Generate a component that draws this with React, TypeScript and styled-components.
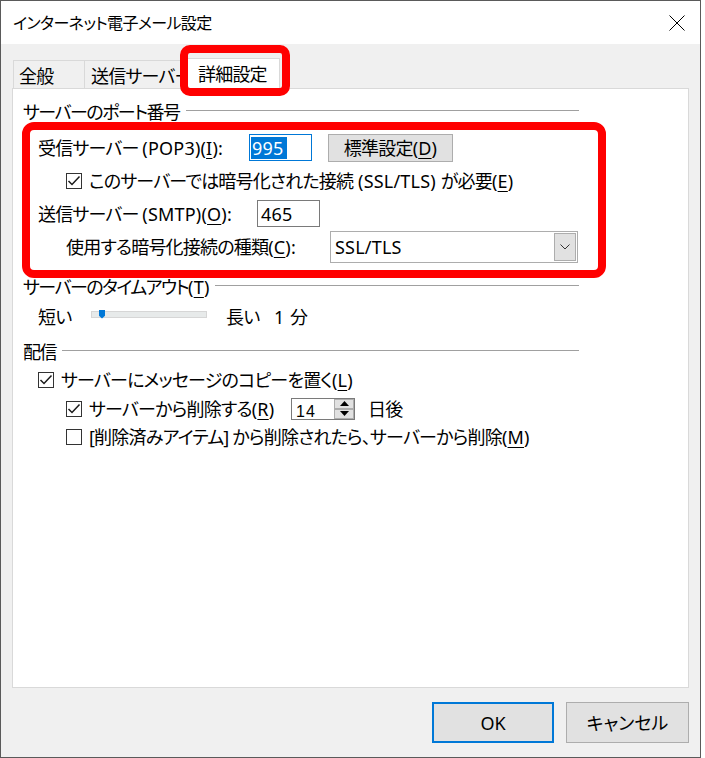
import styled, { createGlobalStyle } from "styled-components";

const GlobalStyle = createGlobalStyle`
  * {
    box-sizing: border-box;
  }
  html,
  body {
    margin: 0;
    padding: 0;
    background: #ffffff;
  }
`;

const UI_FONT = `"Noto Sans", "Noto Sans CJK JP", sans-serif`;

const Window = styled.div`
  width: 701px;
  height: 758px;
  display: flex;
  flex-direction: column;
  border: 1px solid #5a5a5a;
  background: #f0f0f0;
  font-family: ${UI_FONT};
  font-size: 18px;
  font-feature-settings: "palt";
  letter-spacing: -0.8px;
  line-height: 1;
  color: #000000;
`;

const TitleBar = styled.div`
  flex: none;
  height: 43px;
  display: flex;
  align-items: center;
  justify-content: space-between;
  padding: 0 15px 0 12px;
  background: #ffffff;
`;

const Title = styled.span`
  font-size: 16px;
  letter-spacing: -0.6px;
`;

const CloseButton = styled.span`
  display: flex;
  width: 16px;
  height: 16px;
`;

const Body = styled.div`
  flex: 1;
  display: flex;
  flex-direction: column;
  padding: 14px 11px 14px 11px;
`;

const TabStrip = styled.div`
  display: flex;
  align-items: flex-end;
  height: 30px;
  padding-left: 1px;
`;

const Tab = styled.div<{ $active?: boolean; $w: number; $pl: number; $noSides?: boolean }>`
  position: relative;
  z-index: ${(p) => (p.$active ? 2 : 0)};
  display: flex;
  align-items: center;
  width: ${(p) => p.$w}px;
  height: ${(p) => (p.$active ? 31 : 28)}px;
  margin-bottom: ${(p) => (p.$active ? -1 : 0)}px;
  padding-left: ${(p) => p.$pl}px;
  padding-top: ${(p) => (p.$active ? 0 : 2)}px;
  border: 1px solid #d9d9d9;
  border-bottom: none;
  border-left-width: ${(p) => (p.$noSides ? 0 : 1)}px;
  border-right-width: ${(p) => (p.$noSides ? 0 : 1)}px;
  background: ${(p) => (p.$active ? "#ffffff" : "#f0f0f0")};
  white-space: nowrap;
`;

const TabMark = styled.span`
  position: absolute;
  top: -14px;
  left: -7px;
  right: -11px;
  bottom: -7px;
  border: 8px solid #ff0000;
  border-radius: 10px;
  pointer-events: none;
`;

const Panel = styled.div`
  position: relative;
  z-index: 1;
  flex: 1;
  display: flex;
  flex-direction: column;
  padding: 13px 0 0 10px;
  border: 1px solid #d9d9d9;
  background: #ffffff;
`;

const GroupHeader = styled.div<{ $mt?: number }>`
  display: flex;
  align-items: center;
  width: 556px;
  height: 20px;
  margin-top: ${(p) => p.$mt ?? 0}px;
  letter-spacing: -1.5px;
  white-space: nowrap;

  &::after {
    content: "";
    flex: 1;
    height: 1px;
    margin: -3px 0 0 6px;
    background: #a0a0a0;
  }
`;

const Highlight = styled.div`
  width: 584px;
  margin-left: -1px;
  padding: 1px 0 6px 8px;
  border: 8px solid #ff0000;
  border-radius: 12px;
`;

const FieldRow = styled.div<{ $h: number; $indent?: number }>`
  display: flex;
  align-items: center;
  height: ${(p) => p.$h}px;
  padding-left: ${(p) => p.$indent ?? 0}px;
  white-space: nowrap;
`;

const FieldLabel = styled.span<{ $w: number }>`
  flex: none;
  width: ${(p) => p.$w}px;
`;

const Latin = styled.span`
  letter-spacing: 0.2px;
`;

const Key = styled.span`
  text-decoration: underline;
  text-underline-offset: 3px;
  text-decoration-thickness: 1px;
`;

const TextBox = styled.div<{ $focused?: boolean }>`
  flex: none;
  display: flex;
  align-items: center;
  width: 63px;
  height: 27px;
  padding-left: ${(p) => (p.$focused ? 1 : 3)}px;
  border: 1px solid ${(p) => (p.$focused ? "#0078d7" : "#7a7a7a")};
  background: #ffffff;
  letter-spacing: 0.2px;
`;

const Selected = styled.span`
  display: flex;
  align-items: center;
  height: 22px;
  padding: 0 3px 0 1px;
  background: #0078d7;
  color: #ffffff;
`;

const PushButton = styled.div<{ $w: number; $h: number; $default?: boolean; $ml?: number }>`
  flex: none;
  display: flex;
  align-items: center;
  justify-content: center;
  width: ${(p) => p.$w}px;
  height: ${(p) => p.$h}px;
  margin-left: ${(p) => p.$ml ?? 0}px;
  border: ${(p) => (p.$default ? "2px solid #0078d7" : "1px solid #adadad")};
  background: #e1e1e1;
`;

const CheckRow = styled.div<{ $h: number; $indent: number; $mt?: number }>`
  display: flex;
  align-items: center;
  gap: 7px;
  height: ${(p) => p.$h}px;
  margin-top: ${(p) => p.$mt ?? 0}px;
  padding-left: ${(p) => p.$indent}px;
  white-space: nowrap;
`;

const CheckText = styled.span<{ $w?: number }>`
  flex: none;
  width: ${(p) => (p.$w ? `${p.$w}px` : "auto")};
`;

const Box = styled.span`
  flex: none;
  display: flex;
  align-items: center;
  justify-content: center;
  width: 16px;
  height: 16px;
  border: 1px solid #333333;
  background: #ffffff;
`;

const Select = styled.div`
  flex: none;
  display: flex;
  align-items: center;
  justify-content: space-between;
  width: 248px;
  height: 32px;
  padding: 0 1px 0 4px;
  border: 1px solid #adadad;
  background: #ffffff;
  letter-spacing: 0.2px;
`;

const SelectArrow = styled.span`
  display: flex;
  align-items: center;
  justify-content: center;
  width: 22px;
  height: 28px;
  border: 1px solid #adadad;
  background: #e1e1e1;
`;

const SliderRow = styled.div`
  display: flex;
  align-items: center;
  height: 40px;
  padding-left: 15px;
  white-space: nowrap;
`;

const SliderText = styled.span<{ $w: number }>`
  flex: none;
  width: ${(p) => p.$w}px;
`;

const Track = styled.span`
  position: relative;
  flex: none;
  width: 116px;
  height: 7px;
  margin: -6px 19px 0 0;
  border: 1px solid #d6d6d6;
  background: #e7eaea;
`;

const Thumb = styled.span`
  position: absolute;
  left: 7px;
  top: -2px;
  width: 6px;
  height: 9px;
  background: #0078d7;
  clip-path: polygon(0 0, 100% 0, 100% 70%, 50% 100%, 0 70%);
`;

const Spinner = styled.div`
  flex: none;
  display: flex;
  width: 64px;
  height: 22px;
  margin-right: 6px;
  border: 1px solid #7a7a7a;
  background: #ffffff;
  overflow: hidden;
`;

const SpinValue = styled.span`
  flex: 1;
  padding: 5px 0 0 4px;
  font-family: "Liberation Sans", sans-serif;
  font-size: 16px;
  letter-spacing: 1px;
`;

const SpinButtons = styled.span`
  display: flex;
  flex-direction: column;
  width: 20px;
`;

const SpinButton = styled.span`
  flex: 1;
  display: flex;
  align-items: center;
  justify-content: center;
  border: 1px solid #adadad;
  background: #e1e1e1;
`;

const Footer = styled.div`
  display: flex;
  justify-content: flex-end;
  gap: 12px;
  margin-top: 14px;
  letter-spacing: 0;
`;

const Access = ({ k, colon }: { k: string; colon?: boolean }) => (
  <Latin>
    (<Key>{k}</Key>){colon ? ":" : ""}
  </Latin>
);

const Check = () => (
  <svg width="14" height="14" viewBox="0 0 14 14">
    <polyline points="1.5,7 5,10.5 12.5,2.5" fill="none" stroke="#1a1a1a" strokeWidth="1.5" />
  </svg>
);

const CheckBox = ({ checked }: { checked?: boolean }) => <Box>{checked && <Check />}</Box>;

const Triangle = ({ up }: { up?: boolean }) => (
  <svg width="9" height="5" viewBox="0 0 9 5">
    <polygon points={up ? "0,5 9,5 4.5,0" : "0,0 9,0 4.5,5"} fill="#000000" />
  </svg>
);

const App = () => (
  <>
    <GlobalStyle />
    <Window>
      <TitleBar>
        <Title>インターネット電子メール設定</Title>
        <CloseButton>
          <svg width="16" height="16" viewBox="0 0 16 16">
            <path d="M0.5 0.5 L15.5 15.5 M15.5 0.5 L0.5 15.5" stroke="#000000" strokeWidth="1" />
          </svg>
        </CloseButton>
      </TitleBar>
      <Body>
        <TabStrip>
          <Tab $w={72} $pl={5}>
            全般
          </Tab>
          <Tab $w={101} $pl={6} $noSides>
            送信サーバー
          </Tab>
          <Tab $w={94} $pl={11} $active>
            詳細設定
            <TabMark />
          </Tab>
        </TabStrip>
        <Panel>
          <GroupHeader>サーバーのポート番号</GroupHeader>
          <Highlight>
            <FieldRow $h={33}>
              <FieldLabel $w={211}>
                受信サーバー <Latin>(POP3)</Latin>
                <Access k="I" colon />
              </FieldLabel>
              <TextBox $focused>
                <Selected>995</Selected>
              </TextBox>
              <PushButton $w={125} $h={28} $ml={16}>
                標準設定
                <Access k="D" />
              </PushButton>
            </FieldRow>
            <CheckRow $h={33} $indent={28}>
              <CheckBox checked />
              <CheckText>
                このサーバーでは暗号化された接続<Latin> (SSL/TLS) </Latin>が必要
                <Access k="E" />
              </CheckText>
            </CheckRow>
            <FieldRow $h={33}>
              <FieldLabel $w={219}>
                送信サーバー <Latin>(SMTP)</Latin>
                <Access k="O" colon />
              </FieldLabel>
              <TextBox>465</TextBox>
            </FieldRow>
            <FieldRow $h={34} $indent={28}>
              <FieldLabel $w={264}>
                使用する暗号化接続の種類
                <Access k="C" colon />
              </FieldLabel>
              <Select>
                <span>SSL/TLS</span>
                <SelectArrow>
                  <svg width="10" height="6" viewBox="0 0 10 6">
                    <polyline points="0.5,0.5 5,5 9.5,0.5" fill="none" stroke="#333333" strokeWidth="1" />
                  </svg>
                </SelectArrow>
              </Select>
            </FieldRow>
          </Highlight>
          <GroupHeader $mt={-1}>
            サーバーのタイムアウト
            <Access k="T" />
          </GroupHeader>
          <SliderRow>
            <SliderText $w={53}>短い</SliderText>
            <Track>
              <Thumb />
            </Track>
            <SliderText $w={48}>長い</SliderText>
            <SliderText $w={16}>1</SliderText>
            <span>分</span>
          </SliderRow>
          <GroupHeader $mt={5}>配信</GroupHeader>
          <CheckRow $h={28} $indent={15} $mt={4}>
            <CheckBox checked />
            <CheckText>
              サーバーにメッセージのコピーを置く
              <Access k="L" />
            </CheckText>
          </CheckRow>
          <CheckRow $h={29} $indent={43}>
            <CheckBox checked />
            <CheckText $w={195}>
              サーバーから削除する
              <Access k="R" />
            </CheckText>
            <Spinner>
              <SpinValue>14</SpinValue>
              <SpinButtons>
                <SpinButton>
                  <Triangle up />
                </SpinButton>
                <SpinButton>
                  <Triangle />
                </SpinButton>
              </SpinButtons>
            </Spinner>
            <span>日後</span>
          </CheckRow>
          <CheckRow $h={28} $indent={43}>
            <CheckBox />
            <CheckText>
              [削除済みアイテム] から削除されたら、サーバーから削除
              <Access k="M" />
            </CheckText>
          </CheckRow>
        </Panel>
        <Footer>
          <PushButton $w={122} $h={41} $default>
            OK
          </PushButton>
          <PushButton $w={123} $h={41}>
            キャンセル
          </PushButton>
        </Footer>
      </Body>
    </Window>
  </>
);

export default App;
